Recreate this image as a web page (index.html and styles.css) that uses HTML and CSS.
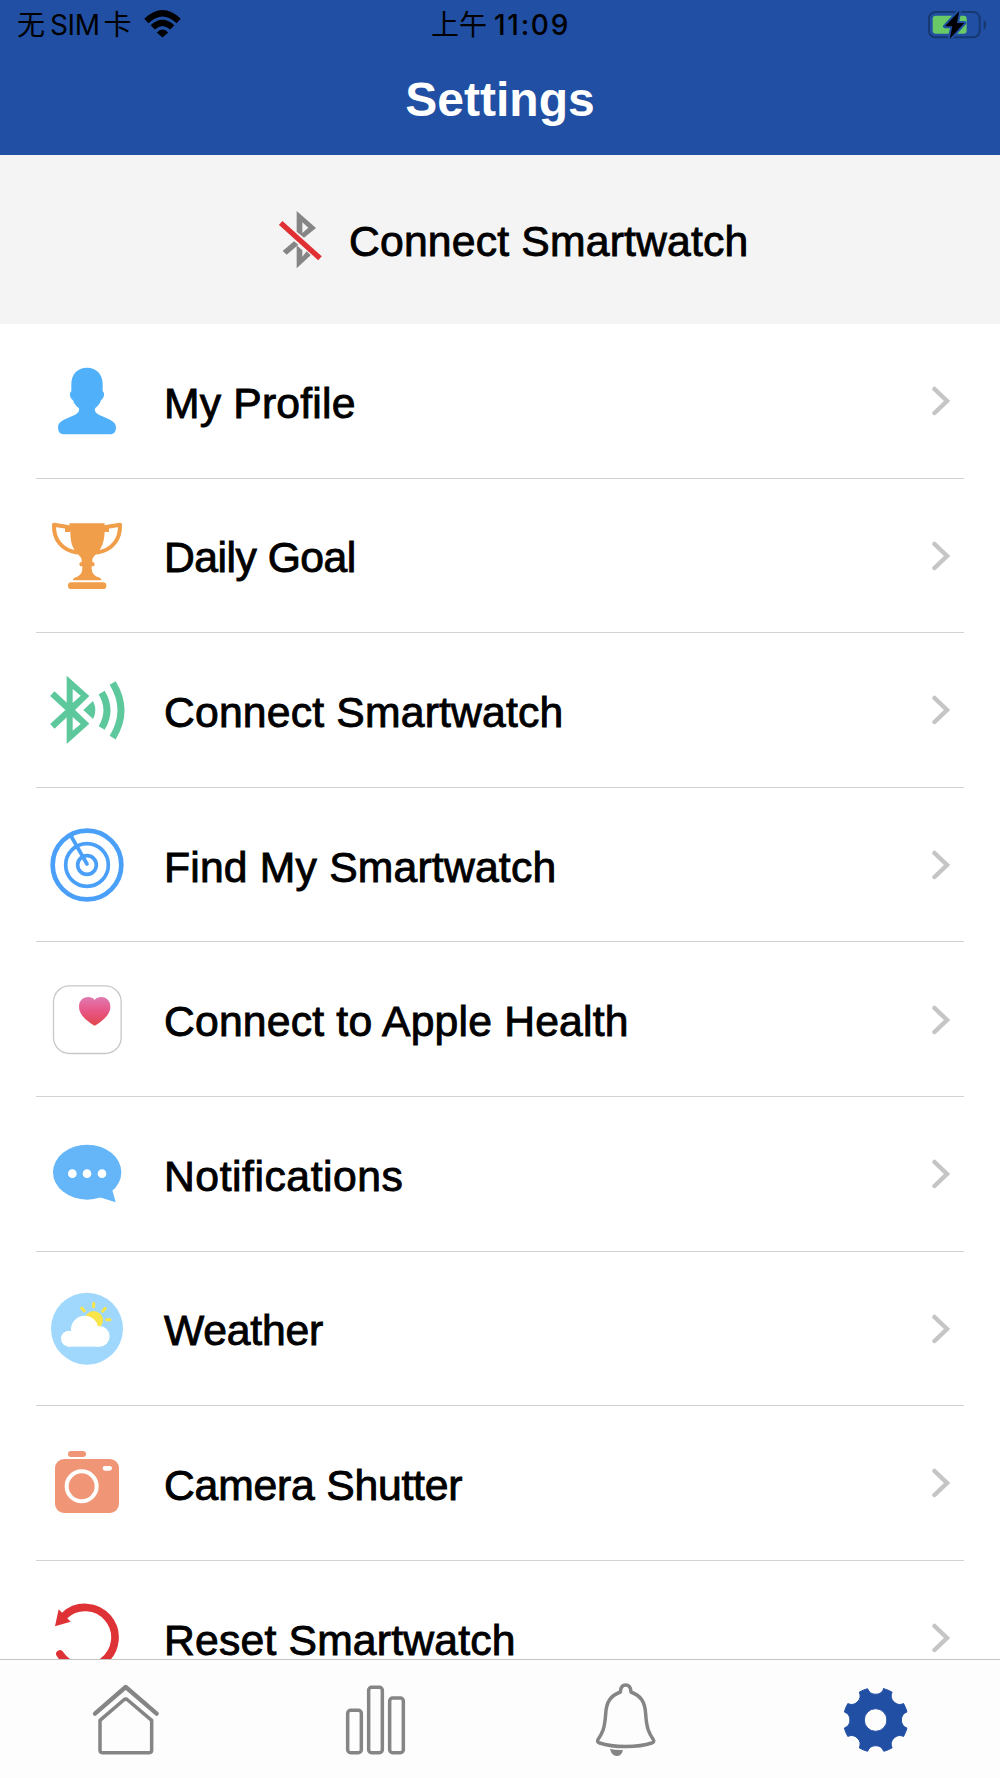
FILE: index.html
```html
<!DOCTYPE html>
<html lang="en">
<head>
<meta charset="utf-8">
<title>Settings</title>
<link rel="stylesheet" href="styles.css">
</head>
<body>
<div class="screen">
	<header class="header">
		<div class="status">
			<div class="carrier">
				<span class="sim">无<span class="latin">SIM</span>卡</span>
				<svg class="wifi" viewBox="0 0 110 82">
					<path class="wave" d="M7 32Q55 -14 103 32M26 51Q55 24 84 51"/>
					<path d="M55 81L38 66Q55 48 72 66Z"/>
				</svg>
			</div>
			<div class="clock">上午<span class="time">11:09</span></div>
			<svg class="battery" viewBox="0 0 180 90">
				<rect class="shell" x="6" y="6" width="152" height="76" rx="19"/>
				<path class="nub" d="M170 29q8 6 8 15t-8 15z"/>
				<rect class="charge" x="17" y="17" width="102" height="54" rx="9"/>
				<path class="bolt" d="M97 3L54 49H76L68 87L112 39H90Z"/>
			</svg>
		</div>
		<h1 class="title">Settings</h1>
	</header>

	<div class="banner">
		<svg class="bt-off" viewBox="0 0 129 174">
			<path fill="#858585" fill-rule="evenodd" d="M53 0L111 51L75 80L53 62ZM70 34V66L88 50Z"/>
			<path fill="#858585" d="M53 103V172L95 133L83 121L70 137V118ZM11 120L45 91L58 101L23 131Z"/>
			<path stroke="#e03034" stroke-width="16" d="M5 36L123 142"/>
		</svg>
		<span class="label">Connect Smartwatch</span>
	</div>

	<main class="list">
		<div class="row">
			<svg class="icon" viewBox="0 0 240 240">
				<path fill="#50b0fa" d="M120 20C91 20 73 40 73 70V91C66 95 68 112 78 118C81 130 88 135 95 141C99 150 93 157 83 162C60 172 33 180 33 198C33 212 38 220 52 220H188C202 220 207 212 207 198C207 180 180 172 157 162C147 157 141 150 145 141C152 135 159 130 162 118C172 112 174 95 167 91V70C167 40 149 20 120 20Z"/>
			</svg>
			<span class="label">My Profile</span>
			<svg class="chevron" viewBox="0 0 18 30"><path d="M2.5 3L15 15L2.5 27"/></svg>
		</div>
		<div class="row">
			<svg class="icon" viewBox="0 0 240 240">
				<g fill="#f09e4a">
					<path d="M67 22H173V48C171 90 158 105 140 122Q134 128 136 139H140q6 6 0 12H134C133 170 140 180 155 184q7 1 9 9H77q2-8 9-9C100 180 107 170 106 151H100q-6-6 0-12h4q2-11-4-17C82 105 70 90 70 48Z"/>
					<rect x="54" y="30" width="16" height="18"/>
					<rect x="170" y="30" width="16" height="18"/>
					<rect x="63" y="199" width="115" height="20" rx="10"/>
				</g>
				<path fill="none" stroke="#f09e4a" stroke-width="12" stroke-linejoin="round" d="M67 34L21 26C19 65 40 103 92 110M173 34L219 26C221 65 200 103 148 110"/>
			</svg>
			<span class="label tighter">Daily Goal</span>
			<svg class="chevron" viewBox="0 0 18 30"><path d="M2.5 3L15 15L2.5 27"/></svg>
		</div>
		<div class="row">
			<svg class="icon" viewBox="0 0 240 240">
				<path fill="#5cc89c" fill-rule="evenodd" d="M59 17L127 78L84 120L127 161L59 222ZM77 57V99L101 77ZM77 141V182L101 162Z"/>
				<path fill="#5cc89c" d="M109 120L138 93Q152 120 138 147Z"/>
				<path fill="none" stroke="#5cc89c" stroke-width="19" d="M16 71L69 120L16 169"/>
				<path fill="none" stroke="#5cc89c" stroke-width="21" d="M164 68Q196 121 164 174M197 39Q247 121 197 203"/>
			</svg>
			<span class="label">Connect Smartwatch</span>
			<svg class="chevron" viewBox="0 0 18 30"><path d="M2.5 3L15 15L2.5 27"/></svg>
		</div>
		<div class="row">
			<svg class="icon" viewBox="0 0 240 240">
				<g fill="none" stroke="#4aa0f8" stroke-width="11" stroke-linecap="round">
					<circle cx="120" cy="120" r="103" stroke-width="14"/>
					<circle cx="120" cy="120" r="64"/>
					<circle cx="120" cy="120" r="28"/>
					<path d="M72 33L120 117"/>
				</g>
			</svg>
			<span class="label">Find My Smartwatch</span>
			<svg class="chevron" viewBox="0 0 18 30"><path d="M2.5 3L15 15L2.5 27"/></svg>
		</div>
		<div class="row">
			<svg class="icon" viewBox="0 0 240 240">
				<defs>
					<linearGradient id="heart" x1="0" y1="0" x2="0" y2="1">
						<stop offset="0" stop-color="#df7bb0"/>
						<stop offset=".45" stop-color="#e8588a"/>
						<stop offset="1" stop-color="#e2454a"/>
					</linearGradient>
				</defs>
				<rect x="19.500" y="17.500" width="203" height="203" rx="48" fill="#fff" stroke="#c8c8c8" stroke-width="4"/>
				<path fill="url(#heart)" d="M143 137C120 124 96 105 96 80C96 50 131 44 143 60C155 44 190 50 190 80C190 105 166 124 143 137Z"/>
			</svg>
			<span class="label">Connect to Apple Health</span>
			<svg class="chevron" viewBox="0 0 18 30"><path d="M2.5 3L15 15L2.5 27"/></svg>
		</div>
		<div class="row">
			<svg class="icon" viewBox="0 0 240 240">
				<ellipse cx="120.500" cy="114.500" rx="102.500" ry="82.500" fill="#64b6f8"/>
				<path fill="#64b6f8" d="M196 169L206 205L158 190Z"/>
				<g fill="#fff">
					<circle cx="76" cy="119" r="13"/>
					<circle cx="120" cy="119" r="13"/>
					<circle cx="165" cy="119" r="13"/>
				</g>
			</svg>
			<span class="label wide">Notifications</span>
			<svg class="chevron" viewBox="0 0 18 30"><path d="M2.5 3L15 15L2.5 27"/></svg>
		</div>
		<div class="row">
			<svg class="icon" viewBox="0 0 240 240">
				<circle cx="120" cy="119" r="108" fill="#9fd8fc"/>
				<circle cx="140" cy="94" r="28" fill="#f9e44a"/>
				<path stroke="#f9e44a" stroke-width="9" stroke-linecap="round" d="M140 43V53M179 92H189M167 67L175 58M104 57L112 66"/>
				<g fill="#fff">
					<circle cx="113" cy="121" r="41"/>
					<circle cx="66" cy="149" r="24"/>
					<circle cx="157" cy="142" r="31"/>
					<rect x="64" y="130" width="94" height="43"/>
				</g>
			</svg>
			<span class="label tight">Weather</span>
			<svg class="chevron" viewBox="0 0 18 30"><path d="M2.5 3L15 15L2.5 27"/></svg>
		</div>
		<div class="row">
			<svg class="icon" viewBox="0 0 240 240">
				<g fill="#f09676">
					<rect x="24" y="48" width="192" height="162" rx="27"/>
					<rect x="63" y="24" width="54" height="18" rx="9"/>
				</g>
				<circle cx="104" cy="130" r="45" fill="none" stroke="#fff" stroke-width="12"/>
				<rect x="167" y="69" width="28" height="14" rx="7" fill="#fff"/>
			</svg>
			<span class="label tight">Camera Shutter</span>
			<svg class="chevron" viewBox="0 0 18 30"><path d="M2.5 3L15 15L2.5 27"/></svg>
		</div>
		<div class="row">
			<svg class="icon" viewBox="0 0 240 240">
				<path fill="none" stroke="#df3236" stroke-width="23" stroke-linecap="round" d="M52 53A90 90 0 1 1 39 168"/>
				<path fill="#df3236" d="M24 85L35 34L71 71Z"/>
			</svg>
			<span class="label">Reset Smartwatch</span>
			<svg class="chevron" viewBox="0 0 18 30"><path d="M2.5 3L15 15L2.5 27"/></svg>
		</div>
	</main>

	<nav class="tabs">
		<svg class="tab" viewBox="0 0 240 240">
			<path stroke-width="13" d="M30 104L122 24L215 104"/>
			<path d="M45 124L116 63Q122 58 128 63L200 124V214Q200 221 193 221H52Q45 221 45 214Z"/>
		</svg>
		<svg class="tab" viewBox="0 0 240 240">
			<rect x="38" y="94" width="41" height="127" rx="9"/>
			<rect x="101" y="25" width="41" height="196" rx="9"/>
			<rect x="164" y="57" width="41" height="164" rx="9"/>
		</svg>
		<svg class="tab" viewBox="0 0 240 240">
			<path d="M106 39Q107 18 122 18Q137 18 138 39C166 50 180 66 182 105C185 150 192 162 205 182Q209 189 200 192C160 206 84 206 44 192Q35 189 39 182C52 162 59 150 62 105C64 66 78 50 106 39Z"/>
			<path class="clapper" d="M75 210Q95 214 114 213Q110 231 95 231T75 210Z"/>
		</svg>
		<svg class="tab active" viewBox="-122 -123 240 240">
			<path fill-rule="evenodd" d="M24.300 -93.900A97 97 0 0 1 49.200 -83.600A26 26 0 0 0 83.600 -49.200A97 97 0 0 1 93.900 -24.300A26 26 0 0 0 93.900 24.300A97 97 0 0 1 83.600 49.200A26 26 0 0 0 49.200 83.600A97 97 0 0 1 24.300 93.900A26 26 0 0 0 -24.300 93.900A97 97 0 0 1 -49.200 83.600A26 26 0 0 0 -83.600 49.200A97 97 0 0 1 -93.900 24.300A26 26 0 0 0 -93.900 -24.300A97 97 0 0 1 -83.600 -49.200A26 26 0 0 0 -49.200 -83.600A97 97 0 0 1 -24.300 -93.900A26 26 0 0 0 24.300 -93.900ZM34 0A34 34 0 1 0 -34 0A34 34 0 1 0 34 0Z"/>
		</svg>
	</nav>
</div>
</body>
</html>
```

FILE: styles.css
```css
body {
	margin: 0;
	background: #fff;
	color: #000;
	font-family: "Liberation Sans", Arial, sans-serif;
}

.screen {
	display: flex;
	flex-direction: column;
	height: 1778px;
	overflow: hidden;
}

.header {
	flex: none;
	height: 155px;
	background: #204fa3;
}

/* status bar */
.status {
	display: grid;
	grid-template-columns: 1fr auto 1fr;
	align-items: center;
	height: 51px;
	padding: 0 13px 0 17px;
	font-family: Inter, "Noto Sans CJK SC", sans-serif;
	font-size: 28px;
	line-height: 51px;
}

.carrier {
	display: flex;
	align-items: center;
}

.sim {
	width: 115px;
	white-space: nowrap;
}

.latin {
	margin: 0 4px 0 5px;
	letter-spacing: -.4px;
}

.wifi {
	width: 37px;
	height: 28px;
	margin: -3px 0 0 12px;
}

.wave {
	fill: none;
	stroke: #000;
	stroke-width: 18;
}

.clock {
	padding-right: 3px;
}

.time {
	margin-left: 7px;
	font-weight: 500;
	letter-spacing: 1.700px;
}

.battery {
	justify-self: end;
	width: 60px;
	height: 30px;
	margin-top: -2px;
}

.shell {
	fill: none;
	stroke: #173870;
	stroke-width: 6;
}

.nub {
	fill: #173870;
}

.charge {
	fill: #69c966;
}

.bolt {
	stroke: #204fa3;
	stroke-width: 12;
	stroke-linejoin: round;
	paint-order: stroke;
}

.title {
	margin: 0;
	color: #fff;
	font-size: 48px;
	line-height: 98px;
	text-align: center;
}

.banner {
	display: flex;
	flex: none;
	align-items: center;
	height: 169px;
	padding-left: 279px;
	background: #f4f4f4;
}

.bt-off {
	width: 43px;
	height: 58px;
	margin-right: 27px;
	fill: none;
}

.label {
	padding-top: 3px;
	font-size: 42.670px;
	line-height: 50px;
	white-space: nowrap;
	letter-spacing: .2px;
	-webkit-text-stroke: .9px #000;
}

.tight {
	letter-spacing: -.2px;
}

.tighter {
	letter-spacing: -.5px;
}

.wide {
	letter-spacing: .55px;
}

/* settings rows */
.list {
	flex: 1;
	min-height: 0;
	overflow: hidden;
	padding: 0 36px;
}

.row {
	display: flex;
	align-items: center;
	box-sizing: border-box;
	height: 154.600px;
	padding: 1px 14px 0 11px;
	border-bottom: 1px solid #d2d2d2;
}

.row .label {
	flex: 1;
	margin-left: 37px;
}

.icon {
	flex: none;
	width: 80px;
	height: 80px;
}

.chevron {
	width: 18px;
	height: 30px;
	fill: none;
	stroke: #c5c5c5;
	stroke-width: 4.500;
	stroke-linecap: round;
}

/* bottom tabs */
.tabs {
	display: grid;
	flex: none;
	grid-template-columns: repeat(4, 1fr);
	place-items: center;
	height: 119px;
	border-top: 1px solid #c4c4c4;
	box-sizing: border-box;
	background: #fdfdfd;
}

.tab {
	width: 80px;
	height: 80px;
	fill: none;
	stroke: #858585;
	stroke-width: 10.500;
	stroke-linecap: round;
	stroke-linejoin: round;
}

.clapper {
	fill: #858585;
	stroke: none;
}

.active {
	fill: #204fa3;
	stroke: #204fa3;
	stroke-width: 3;
}
```
